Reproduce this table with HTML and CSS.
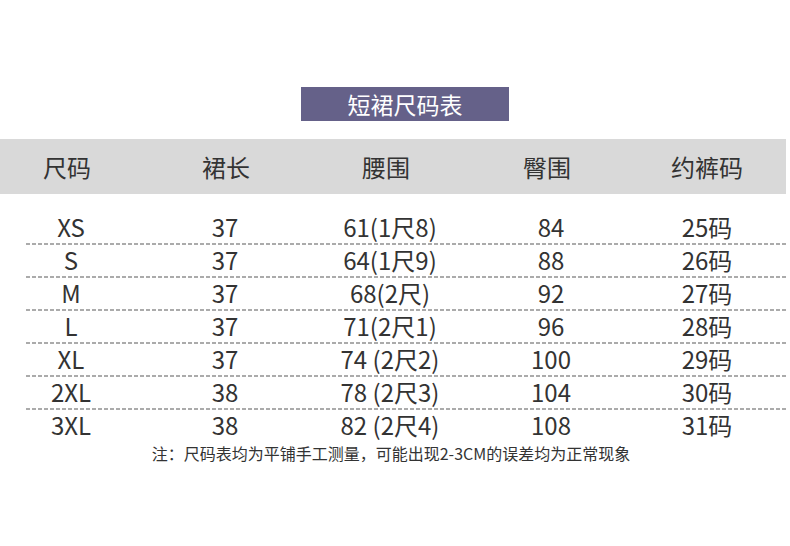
FILE: index.html
```html
<!DOCTYPE html>
<html lang="zh">
<head>
<meta charset="utf-8">
<title>短裙尺码表</title>
<link rel="stylesheet" href="styles.css">
</head>
<body>
<div class="page">
  <div class="title-wrap"><div class="title">短裙尺码表</div></div>
  <div class="head">
    <div class="cell">尺码</div>
    <div class="cell">裙长</div>
    <div class="cell">腰围</div>
    <div class="cell">臀围</div>
    <div class="cell">约裤码</div>
  </div>
  <div class="rows">
    <div class="row"><div class="cell">XS</div><div class="cell">37</div><div class="cell">61(1尺8)</div><div class="cell">84</div><div class="cell">25码</div></div>
    <div class="row"><div class="cell">S</div><div class="cell">37</div><div class="cell">64(1尺9)</div><div class="cell">88</div><div class="cell">26码</div></div>
    <div class="row"><div class="cell">M</div><div class="cell">37</div><div class="cell">68(2尺)</div><div class="cell">92</div><div class="cell">27码</div></div>
    <div class="row"><div class="cell">L</div><div class="cell">37</div><div class="cell">71(2尺1)</div><div class="cell">96</div><div class="cell">28码</div></div>
    <div class="row"><div class="cell">XL</div><div class="cell">37</div><div class="cell">74 (2尺2)</div><div class="cell">100</div><div class="cell">29码</div></div>
    <div class="row"><div class="cell">2XL</div><div class="cell">38</div><div class="cell">78 (2尺3)</div><div class="cell">104</div><div class="cell">30码</div></div>
    <div class="row last"><div class="cell">3XL</div><div class="cell">38</div><div class="cell">82 (2尺4)</div><div class="cell">108</div><div class="cell">31码</div></div>
  </div>
  <div class="note">注：尺码表均为平铺手工测量，可能出现2-3CM的误差均为正常现象</div>
</div>
</body>
</html>
```
FILE: styles.css
```css
html, body {
  margin: 0;
  padding: 0;
  background: #ffffff;
}
body {
  font-family: "Noto Sans CJK SC", "Noto Sans", sans-serif;
  color: #333333;
}
.page {
  width: 790px;
  height: 546px;
  padding-top: 87px;
  box-sizing: border-box;
}
.title-wrap {
  display: flex;
  padding-left: 301px;
}
.title {
  width: 208px;
  height: 34px;
  background: #656189;
  color: #ffffff;
  font-size: 23px;
  line-height: 34px;
  text-align: center;
}
.head {
  margin-top: 18px;
  width: 786px;
  height: 55px;
  background: #d9d9d9;
  display: grid;
  grid-template-columns: 134px 184px 136px 186px 134px;
  align-items: center;
  font-size: 24px;
  color: #333;
}
.cell {
  text-align: center;
  white-space: nowrap;
}
.rows {
  margin-top: 18px;
  width: 788px;
}
.row {
  display: grid;
  grid-template-columns: 142px 166px 164px 158px 154px;
  height: 33px;
  box-sizing: border-box;
  padding-bottom: 3px;
  align-items: center;
  font-size: 24px;
  line-height: 30px;
  color: #333;
  background-image: repeating-linear-gradient(to right, #ababab 0 4px, transparent 4px 6px);
  background-size: calc(100% - 26px) 2px;
  background-repeat: no-repeat;
  background-position: 26px bottom;
}
.row.last {
  background-image: none;
}
.note {
  margin-top: -1px;
  font-size: 16px;
  line-height: 22px;
  text-align: center;
  padding-right: 8px;
  color: #333;
}
```
